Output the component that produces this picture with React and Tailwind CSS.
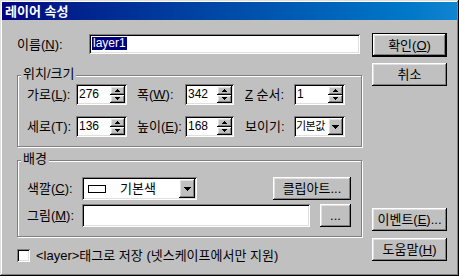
const raised =
  "shadow-[inset_-1px_-1px_0_#000,inset_1px_1px_0_#fff,inset_-2px_-2px_0_#808080,inset_2px_2px_0_#dfdfdf]";
const sunken =
  "shadow-[inset_1px_1px_0_#808080,inset_-1px_-1px_0_#fff,inset_2px_2px_0_#000,inset_-2px_-2px_0_#dfdfdf]";
const etched = "border border-[#808080] shadow-[inset_1px_1px_0_#fff,1px_1px_0_#fff]";

function UpArrow() {
  return (
    <svg width="5" height="3" viewBox="0 0 5 3" shapeRendering="crispEdges">
      <rect x="2" y="0" width="1" height="1" fill="#000" />
      <rect x="1" y="1" width="3" height="1" fill="#000" />
      <rect x="0" y="2" width="5" height="1" fill="#000" />
    </svg>
  );
}
function DownArrow() {
  return (
    <svg width="5" height="3" viewBox="0 0 5 3" shapeRendering="crispEdges">
      <rect x="0" y="0" width="5" height="1" fill="#000" />
      <rect x="1" y="1" width="3" height="1" fill="#000" />
      <rect x="2" y="2" width="1" height="1" fill="#000" />
    </svg>
  );
}
function ComboArrow() {
  return (
    <svg width="7" height="4" viewBox="0 0 7 4" shapeRendering="crispEdges">
      <rect x="0" y="0" width="7" height="1" fill="#000" />
      <rect x="1" y="1" width="5" height="1" fill="#000" />
      <rect x="2" y="2" width="3" height="1" fill="#000" />
      <rect x="3" y="3" width="1" height="1" fill="#000" />
    </svg>
  );
}

function Spin({ value, wide }) {
  return (
    <div
      className={`flex h-[21px] ${wide ? "w-[51px]" : "w-[49px]"} bg-white p-[2px] ${sunken}`}
    >
      <div className="flex-1 pl-[1px] pt-[1px] text-[12px] leading-[14px]">{value}</div>
      <div className="flex w-[15px] flex-col">
        <div className={`flex flex-1 items-center justify-center bg-[#c0c0c0] ${raised}`}>
          <UpArrow />
        </div>
        <div className={`flex flex-1 items-center justify-center bg-[#c0c0c0] ${raised}`}>
          <DownArrow />
        </div>
      </div>
    </div>
  );
}

function Btn({ children, className }) {
  return (
    <div
      className={`flex items-center justify-center whitespace-nowrap bg-[#c0c0c0] ${raised} ${className}`}
    >
      {children}
    </div>
  );
}

export default function App() {
  return (
    <div
      className={`flex h-[276px] w-[459px] flex-col bg-[#c0c0c0] p-[2px] font-['Liberation_Sans','Noto_Sans_CJK_KR',sans-serif] text-[13px] leading-[15px] text-black shadow-[inset_-1px_-1px_0_#000,inset_1px_1px_0_#dfdfdf,inset_-2px_-2px_0_#808080,inset_2px_2px_0_#fff]`}
    >
      <div className="flex h-[18px] items-center bg-linear-to-r from-[#000080] to-[#1084d0] pl-[3px] font-bold text-white">
        레이어 속성
      </div>
      <div className="flex flex-1 pl-[15px]">
        {/* left column */}
        <div className="flex w-[345px] flex-col pt-[14px]">
          <div className="flex h-[20px] items-center">
            <span className="w-[72px] whitespace-nowrap">
              이름(<u>N</u>):
            </span>
            <div className={`flex h-[20px] w-[271px] items-start bg-white p-[2px] ${sunken}`}>
              <span className="ml-[1px] mt-[1px] bg-[#000080] px-[1px] text-[12px] leading-[13px] text-white">
                layer1
              </span>
            </div>
          </div>

          {/* group 1 */}
          <div className={`relative mt-[21px] flex h-[72px] flex-col gap-[11px] pl-[9px] pt-[8px] ${etched}`}>
            <span className="absolute left-[3px] top-[-10px] bg-[#c0c0c0] px-[2px] leading-[16px]">
              위치/크기
            </span>
            <div className="flex h-[21px] items-center whitespace-nowrap">
              <span className="w-[49px]">
                가로(<u>L</u>):
              </span>
              <Spin value="276" wide />
              <span className="ml-[10px] w-[48px]">
                폭(<u>W</u>):
              </span>
              <Spin value="342" />
              <span className="ml-[11px] w-[49px]">
                <u>Z</u> 순서:
              </span>
              <Spin value="1" wide />
            </div>
            <div className="flex h-[21px] items-center whitespace-nowrap">
              <span className="w-[49px]">세로(T):</span>
              <Spin value="136" wide />
              <span className="ml-[10px] w-[48px]">
                높이(<u>E</u>):
              </span>
              <Spin value="168" />
              <span className="ml-[11px] w-[49px]">보이기:</span>
              <div className={`flex h-[21px] w-[51px] bg-white p-[2px] ${sunken}`}>
                <div className="flex-1 overflow-hidden pt-[1px] text-[11px] leading-[14px] tracking-[-0.5px]">
                  기본값
                </div>
                <div className={`flex w-[15px] items-center justify-center bg-[#c0c0c0] ${raised}`}>
                  <ComboArrow />
                </div>
              </div>
            </div>
          </div>

          {/* group 2 */}
          <div className={`relative mt-[13px] flex h-[77px] flex-col gap-[4px] pl-[9px] pt-[16px] ${etched}`}>
            <span className="absolute left-[3px] top-[-10px] bg-[#c0c0c0] px-[2px] leading-[16px]">
              배경
            </span>
            <div className="flex h-[23px] items-center whitespace-nowrap">
              <span className="w-[55px]">
                색깔(<u>C</u>):
              </span>
              <div className={`flex h-[23px] w-[115px] items-center bg-white p-[2px] ${sunken}`}>
                <div className="ml-[4px] h-[8px] w-[18px] border border-black bg-white" />
                <span className="ml-[14px] flex-1">기본색</span>
                <div className={`flex h-[19px] w-[16px] items-center justify-center bg-[#c0c0c0] ${raised}`}>
                  <ComboArrow />
                </div>
              </div>
              <Btn className="ml-[76px] h-[23px] w-[78px]">클립아트...</Btn>
            </div>
            <div className="flex h-[23px] items-center whitespace-nowrap">
              <span className="w-[55px]">
                그림(<u>M</u>):
              </span>
              <div className={`h-[23px] w-[228px] bg-white ${sunken}`} />
              <Btn className="ml-[10px] h-[23px] w-[31px]">...</Btn>
            </div>
          </div>

          {/* checkbox */}
          <div className="mt-[11px] flex items-center whitespace-nowrap">
            <div className={`h-[13px] w-[13px] bg-white ${sunken}`} />
            <span className="ml-[6px]">&lt;layer&gt;태그로 저장 (넷스케이프에서만 지원)</span>
          </div>
        </div>

        {/* right column */}
        <div className="ml-[10px] flex w-[75px] flex-col pt-[13px]">
          <div className="h-[24px] border border-black">
            <Btn className="h-full w-full">
              확인(<u>O</u>)
            </Btn>
          </div>
          <Btn className="mt-[6px] h-[23px]">취소</Btn>
          <Btn className="mt-[122px] h-[23px]">
            이벤트(<u>E</u>)...
          </Btn>
          <Btn className="mt-[7px] h-[23px]">
            도움말(<u>H</u>)
          </Btn>
        </div>
      </div>
    </div>
  );
}
